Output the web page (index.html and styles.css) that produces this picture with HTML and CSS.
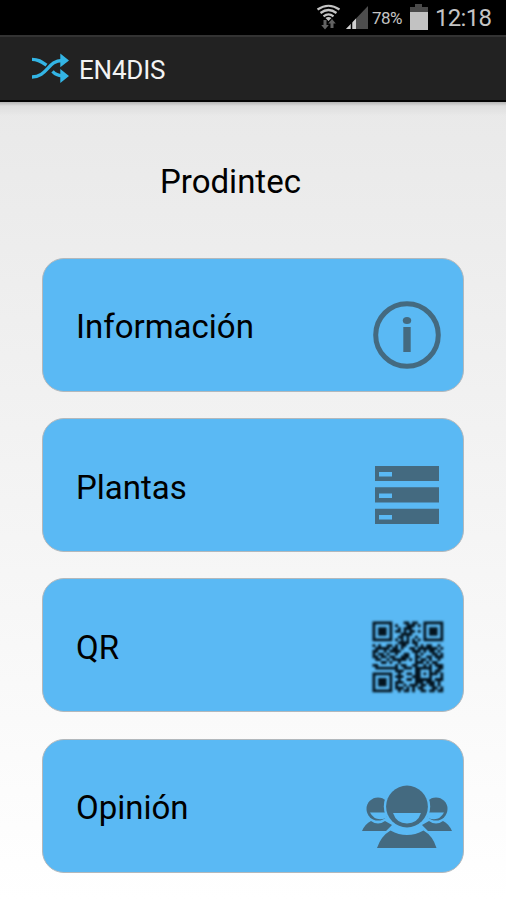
FILE: index.html
```
<!DOCTYPE html>
<html lang="es">
<head>
<meta charset="utf-8">
<title>EN4DIS</title>
<link rel="stylesheet" href="styles.css">
</head>
<body>
<div class="status">
  <svg class="signals" width="64" height="36" viewBox="0 0 64 36">
    <g fill="none" stroke="#c4c4c4" stroke-width="2.200">
      <path d="M1.500 9.500Q12.500 2 23.500 9.500M4.500 13Q12.500 7 20.500 13M7.500 16.300Q12.500 12.500 17.500 16.300"/>
    </g>
    <path d="M9.500 18Q12.500 15.800 15.500 18L12.500 21Z" fill="#c4c4c4"/>
    <path d="M7.500 20h3v5h2.300l-3.800 4.500-3.800-4.500h2.300zM14.500 28h3v-4.500h2.300L16 19l-3.800 4.500h2.300z" fill="#626262"/>
    <path d="M30 29 52 6v23z" fill="#4d4d4d"/>
    <path d="M30 29 40 18.500V29z" fill="#d0d0d0"/>
    <path d="M35.500 22v7" stroke="#000" stroke-width="1.500"/>
  </svg>
  <span class="percent">78%</span>
  <svg class="battery" width="18" height="36" viewBox="0 0 18 36">
    <path d="M0 7h5V4h7v3h6v5H0z" fill="#4a4a4a"/>
    <path d="M0 12h18v18H0z" fill="#c2c2c2"/>
  </svg>
  <span class="clock">12:18</span>
</div>
<header class="bar">
  <svg class="logo" width="38" height="32" viewBox="0 0 38 32">
    <g fill="none" stroke="#33b5e5" stroke-width="3.300">
      <path d="M0 6.300C7 6.300 10 9 14.500 12.200M20.500 18.300C23 21 25 22.500 30 22.800"/>
      <path d="M0 24C15 24 16 7.500 30 7.500"/>
    </g>
    <path d="M28.300.500 37 7.500 28.300 14.300zM28.300 16 37 23 28.300 30z" fill="#33b5e5"/>
  </svg>
  <h1>EN4DIS</h1>
</header>
<main>
  <h2>Prodintec</h2>
  <nav>
    <a class="card"><span class="label">Información</span>
      <svg class="icon" width="90" height="80" viewBox="0 0 90 80">
        <circle cx="45" cy="40" r="31.300" fill="none" stroke="#446a80" stroke-width="5"/>
        <ellipse cx="45" cy="25.500" rx="4.200" ry="3.600" fill="#446a80"/>
        <path d="M41.300 32h7.400v25h-7.400z" fill="#446a80"/>
      </svg>
    </a>
    <a class="card"><span class="label">Plantas</span>
      <svg class="icon" width="90" height="80" viewBox="0 0 90 80">
        <path fill="#446a80" fill-rule="evenodd" d="M13 11h64v15H13zM17 17v4.500h13V17zM13 32.300h64v15.200H13zM17 38.500V43h13v-4.500zM13 53.800h64V69H13zM17 60v4.500h13V60z"/>
      </svg>
    </a>
    <a class="card"><span class="label">QR</span>
      <svg class="icon" width="90" height="80" viewBox="0 0 90 80">
        <path id="qr" class="qr" transform="translate(10.500 6.500) scale(2.830)"/>
      </svg>
    </a>
    <a class="card"><span class="label">Opinión</span>
      <svg class="icon" width="90" height="80" viewBox="0 0 90 80">
        <g transform="translate(0 10)">
          <g fill="#446a80">
            <circle cx="16" cy="23" r="11.500"/>
            <circle cx="74" cy="23" r="11.500"/>
            <path d="M0 45Q3 38 9 35Q16 40 23 35L30 39 24 45zM90 45Q87 38 81 35Q74 40 67 35L60 39 66 45z"/>
          </g>
          <g fill="#5ab9f4">
            <path d="M8 26.500h16v5.500Q13 36 8 26.500zM82 26.500H66v5.500Q77 36 82 26.500z"/>
            <circle cx="45" cy="20.500" r="23.200"/>
          </g>
          <circle cx="45" cy="20.500" r="20.900" fill="#446a80"/>
          <path d="M31 27h28Q55.500 37.500 45 37.500T31 27z" fill="#5ab9f4"/>
          <path d="M15 62Q19 50 28.500 44.500Q45 53.500 61.500 44.500Q71 50 74.500 62z" fill="#446a80"/>
        </g>
      </svg>
    </a>
  </nav>
</main>
<script src="qr.js"></script>
</body>
</html>
```
FILE: styles.css
```
* { box-sizing: border-box; }
body {
  margin: 0;
  width: 506px;
  height: 900px;
  overflow: hidden;
  font-family: Roboto, "Liberation Sans", sans-serif;
  color: #000;
}
.status {
  height: 35px;
  background: #000;
  display: flex;
  align-items: flex-start;
  padding-left: 316px;
  color: #c4c4c4;
  line-height: 36px;
}
.signals { flex: none; margin-right: -8px; }
.percent { width: 39px; font-size: 17px; letter-spacing: -.6px; }
.battery { flex: none; margin-left: -1px; }
.clock { margin-left: 7px; font-size: 24px; letter-spacing: -.7px; }
.bar {
  height: 67px;
  background: #222;
  border-top: 2px solid #333;
  border-bottom: 2px solid #050505;
  display: flex;
  align-items: center;
  padding: 0 0 0 32px;
}
.logo { flex: none; }
.bar h1 {
  margin: 2px 0 0 9px;
  font-size: 26px;
  font-weight: 400;
  line-height: 32px;
  letter-spacing: -.2px;
  color: #f3f3f3;
}
main {
  height: 798px;
  padding: 57px 42px 0;
  background: linear-gradient(#b4b4b4 0, #dedede 4px, transparent 14px), linear-gradient(#e9e9e9, #fff);
}
h2 {
  margin: 0 0 0 118px;
  font-size: 33px;
  font-weight: 400;
  line-height: 46px;
  height: 98.700px;
}
nav { display: flex; flex-direction: column; gap: 26.400px; }
.card {
  height: 134px;
  border: 1px solid #b2b8bc;
  border-radius: 22px;
  background: #5ab9f4;
  display: flex;
  align-items: center;
  justify-content: space-between;
  padding: 20px 11px 0 33px;
}
.label { font-size: 33px; line-height: 40px; margin-top: -15px; }
.icon { flex: none; }
.qr { fill: #04141f; filter: blur(.33px); }
```
FILE: qr.js
```
const rows = [
  "1111111000011011001111111",
  "1000001010001110101000001",
  "1011101001011100001011101",
  "1011101011010110101011101",
  "1011101000111100001011101",
  "1000001001101001001000001",
  "1111111010101010101111111",
  "0000000001111011000000000",
  "1010011010110001010110010",
  "0111110110100110111111101",
  "1100101111000011101011010",
  "1011010010011001010001101",
  "1101101100111001100110111",
  "0110010111110101011010010",
  "0001101001000001110101100",
  "1100000010110011001010111",
  "0111111110011101111110011",
  "0000000011100001100010110",
  "1111111001001101101011101",
  "1000001011100011100010001",
  "1011101001001101111110111",
  "1011101011100001110111010",
  "1011101010010111011011010",
  "1000001011101010110001101",
  "1111111001011010011011011"
];
let d = "";
rows.forEach((row, y) => {
  for (const run of row.matchAll(/1+/g)) {
    d += `M${run.index} ${y}h${run[0].length}v1h-${run[0].length}z`;
  }
});
document.getElementById("qr").setAttribute("d", d);
```
